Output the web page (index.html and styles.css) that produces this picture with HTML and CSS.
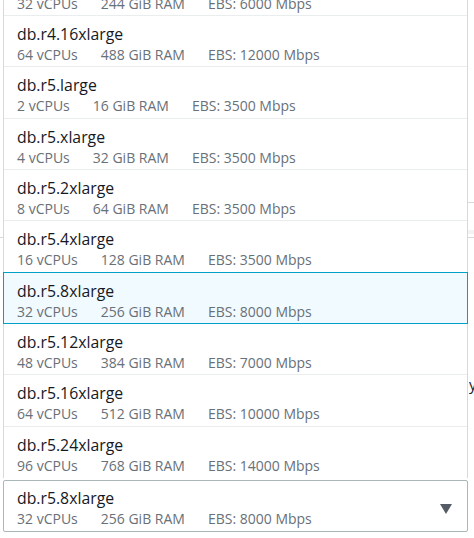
FILE: index.html
```html
<!doctype html>
<html lang="en">
<head>
	<meta charset="UTF-8">
	<title>Instance class</title>
	<link rel="stylesheet" href="styles.css">
</head>
<body>

	<div id="page">

		<!-- form behind the dropdown -->
		<div class="backdrop">
			<div class="back-rule rule-a"></div>
			<div class="back-band"></div>
			<div class="back-rule rule-b"></div>
			<div class="back-text">y</div>
		</div>

		<!-- open instance class menu -->
		<div class="menu">
			<ul class="options">
				<li class="option">
					<div class="name">db.r4.8xlarge</div>
					<div class="specs"><span>32 vCPUs</span><span>244 GiB RAM</span><span>EBS: 6000 Mbps</span></div>
				</li>
				<li class="option">
					<div class="name">db.r4.16xlarge</div>
					<div class="specs"><span>64 vCPUs</span><span>488 GiB RAM</span><span>EBS: 12000 Mbps</span></div>
				</li>
				<li class="option">
					<div class="name">db.r5.large</div>
					<div class="specs"><span>2 vCPUs</span><span>16 GiB RAM</span><span>EBS: 3500 Mbps</span></div>
				</li>
				<li class="option">
					<div class="name">db.r5.xlarge</div>
					<div class="specs"><span>4 vCPUs</span><span>32 GiB RAM</span><span>EBS: 3500 Mbps</span></div>
				</li>
				<li class="option">
					<div class="name">db.r5.2xlarge</div>
					<div class="specs"><span>8 vCPUs</span><span>64 GiB RAM</span><span>EBS: 3500 Mbps</span></div>
				</li>
				<li class="option">
					<div class="name">db.r5.4xlarge</div>
					<div class="specs"><span>16 vCPUs</span><span>128 GiB RAM</span><span>EBS: 3500 Mbps</span></div>
				</li>
				<li class="option selected">
					<div class="name">db.r5.8xlarge</div>
					<div class="specs"><span>32 vCPUs</span><span>256 GiB RAM</span><span>EBS: 8000 Mbps</span></div>
				</li>
				<li class="option">
					<div class="name">db.r5.12xlarge</div>
					<div class="specs"><span>48 vCPUs</span><span>384 GiB RAM</span><span>EBS: 7000 Mbps</span></div>
				</li>
				<li class="option">
					<div class="name">db.r5.16xlarge</div>
					<div class="specs"><span>64 vCPUs</span><span>512 GiB RAM</span><span>EBS: 10000 Mbps</span></div>
				</li>
				<li class="option last">
					<div class="name">db.r5.24xlarge</div>
					<div class="specs"><span>96 vCPUs</span><span>768 GiB RAM</span><span>EBS: 14000 Mbps</span></div>
				</li>
			</ul>

			<div class="trigger">
				<div class="trigger-text">
					<div class="name">db.r5.8xlarge</div>
					<div class="specs"><span>32 vCPUs</span><span>256 GiB RAM</span><span>EBS: 8000 Mbps</span></div>
				</div>
				<svg class="caret" width="12" height="10" viewBox="0 0 12 10"><path d="M0 0 H12 L6 10 Z" fill="#545b64"/></svg>
			</div>
		</div>

	</div>

</body>
</html>
```

FILE: styles.css
```css
body,ul,li {
	margin: 0px;
	padding: 0px;
	list-style: none;
}

body {
	background: #fff;
	font-family: "Open Sans", "Liberation Sans", Arial, sans-serif;
	color: #16191f;
}

#page {
	width: 474px;
	height: 538px;
	position: relative;
	overflow: hidden;
}

/* 背景表单 */
.backdrop {
	display: flex;
	flex-direction: column;
	align-items: flex-end;
	padding-top: 202px;
}

.back-rule {
	height: 1px;
	background: #d5dbdb;
}

.rule-a {
	width: 10px;
}

.back-band {
	margin-top: 27px;
	width: 10px;
	height: 4px;
	background: #f2f3f3;
}

.rule-b {
	margin-top: 3px;
	width: 474px;
}

.back-text {
	margin-top: 136px;
	width: 5px;
	font-size: 15px;
	line-height: 20px;
	color: #16191f;
	overflow: hidden;
}

/* 下拉菜单 */
.menu {
	position: absolute;
	left: 3px;
	top: -35.33px;
	width: 465px;
	background: #fff;
}

.options {
	border-left: 1px solid #d5dbdb;
	border-right: 1px solid #d5dbdb;
	background: #fff;
}

.option {
	padding: 8px 13px 2.33px;
	border-bottom: 1px solid #eaeded;
}

.option.last {
	border-bottom: none;
	padding-bottom: 3.33px;
}

.option.selected {
	background: #f1faff;
	border: 1px solid #00a1c9;
	margin: -1px -1px 0;
	padding: 8px 13px 2.33px;
}

.name {
	font-size: 15.8px;
	line-height: 21px;
	color: #16191f;
}

.specs {
	font-size: 14px;
	line-height: 19px;
	color: #687078;
	white-space: nowrap;
}

.specs span {
	margin-right: 23px;
}

/* 选择框 */
.trigger {
	margin-top: 2px;
	border: 1px solid #aab7b8;
	border-radius: 2px;
	padding: 7px 15px 3px 13px;
	display: flex;
	align-items: center;
	justify-content: space-between;
	background: #fff;
}

.caret {
	display: block;
	margin-top: 2px;
}
```
